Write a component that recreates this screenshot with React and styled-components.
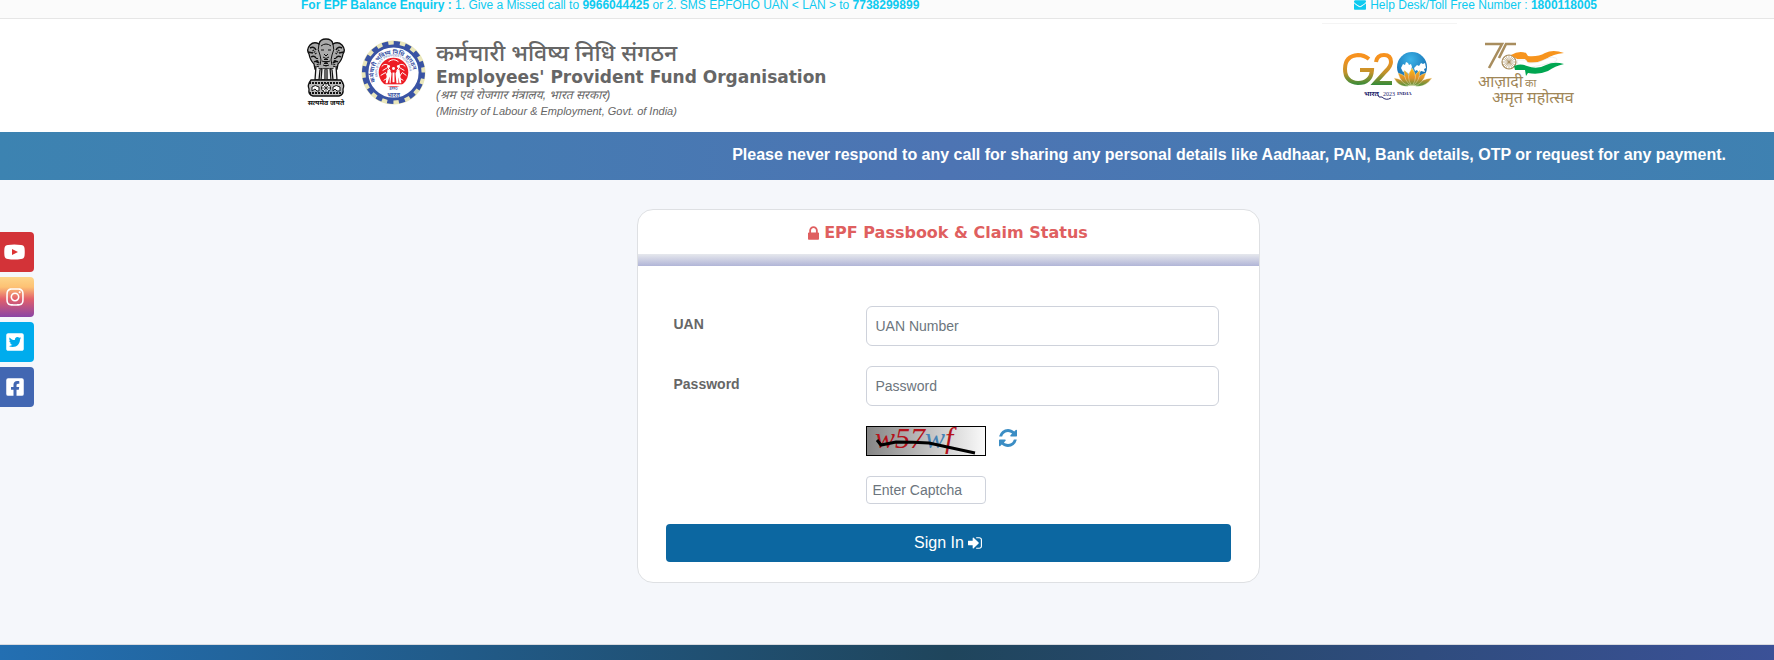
import styled, { createGlobalStyle } from "styled-components";
import { FaTwitterSquare, FaFacebookSquare, FaInstagram } from "react-icons/fa";

const GlobalStyle = createGlobalStyle`
  * {
    box-sizing: border-box;
  }
  body {
    margin: 0;
    background: #f5f7fb;
    color: #666;
    font-family: "Liberation Sans", Arial, "Noto Sans", sans-serif;
    font-size: 14px;
    line-height: 20px;
  }
`;

const Page = styled.div`
  display: flex;
  flex-direction: column;
  min-height: 100vh;
`;

const Container = styled.div`
  display: flex;
  justify-content: space-between;
  width: 100%;
  max-width: 1296px;
  margin: 0 auto;
`;

const TopBar = styled.div`
  height: 19px;
  padding-left: 124px;
  overflow: hidden;
  background: #fbfbfb;
  border-bottom: 1px solid #e6e6e6;
  color: #0dcaf0;
  font-size: 12px;
  line-height: 10px;
`;

const HelpDesk = styled.span`
  display: flex;
  gap: 4px;
`;

const Header = styled.header`
  padding-left: 124px;
  background: #fff;

  ${Container} {
    height: 113px;
    align-items: flex-start;
  }
`;

const Brand = styled.div`
  display: flex;
  gap: 10px;
  padding: 17px 0 0 4px;
`;

const Logos = styled.div`
  display: flex;
  align-items: center;
  gap: 12px;
  height: 72px;
`;

const BrandText = styled.div`
  display: flex;
  flex-direction: column;
  padding-top: 7px;
`;

const HindiTitle = styled.div`
  font-family: "Noto Sans Devanagari", "Noto Sans", sans-serif;
  font-size: 23px;
  font-weight: 500;
  line-height: 24px;
`;

const EnglishTitle = styled.h1`
  margin: 0;
  font-family: "DejaVu Sans", sans-serif;
  font-size: 17px;
  font-weight: bold;
  line-height: 20px;
`;

const Ministry = styled.div`
  font-family: "Liberation Sans", "Noto Sans Devanagari", sans-serif;
  font-size: ${(p) => (p.lang === "hi" ? "12px" : "11px")};
  font-style: italic;
  line-height: 16px;
`;

const Campaigns = styled.div`
  display: flex;
  gap: 20px;
  padding: 4px 18px 0 0;
`;

const G20Frame = styled.div`
  width: 135px;
  padding: 27px 0 0 20px;
  border-top: 1px solid #f4f4f4;
`;

const AzadiFrame = styled.div`
  padding-top: 18px;
`;

const Notice = styled.div`
  display: flex;
  justify-content: flex-end;
  height: 48px;
  padding: 13px 48px 0;
  overflow: hidden;
  background: linear-gradient(to right, #3c83b1 0, #4d74b3 948px, #3c83b1 1896px);
  color: #fff;
  font-size: 16px;
  font-weight: bold;
  white-space: nowrap;
`;

const Main = styled.main`
  display: flex;
  flex: 1;
`;

const Social = styled.nav`
  display: flex;
  flex: 0 0 122px;
  flex-direction: column;
  align-items: flex-start;
  gap: 5px;
  padding-top: 52px;
`;

const SocialLink = styled.a`
  display: flex;
  align-items: center;
  justify-content: flex-end;
  width: 34px;
  height: 40px;
  padding-right: 9px;
  border-radius: 0 4px 4px 0;
  background: ${(p) => p.$bg};
  color: #fff;
`;

const Content = styled.div`
  flex: 1;
  padding: 29px 0 61px;
`;

const Card = styled.section`
  width: 100%;
  max-width: 623px;
  margin: 0 auto;
  overflow: hidden;
  background: #fff;
  border: 1px solid #dee0e3;
  border-radius: 16px;
`;

const CardTitle = styled.h2`
  display: flex;
  align-items: center;
  justify-content: center;
  gap: 5px;
  height: 44px;
  margin: 0;
  padding-top: 2px;
  color: #df5f60;
  font-family: "DejaVu Sans", sans-serif;
  font-size: 16px;
  font-weight: bold;
`;

const CardStripe = styled.div`
  height: 12px;
  background: linear-gradient(#e6e8ed, #b1b5d7);
`;

const Form = styled.form`
  display: flex;
  flex-direction: column;
  gap: 20px;
  padding: 40px 28px 20px;
`;

const Row = styled.div`
  display: grid;
  grid-template-columns: 192px 1fr;
  padding: 0 12px 0 8px;
`;

const Label = styled.label`
  padding-top: 8px;
  font-weight: bold;
`;

const Input = styled.input`
  width: ${(p) => (p.$small ? "120px" : "100%")};
  height: ${(p) => (p.$small ? "28px" : "40px")};
  padding: 0 ${(p) => (p.$small ? "6px" : "9px")};
  border: 1px solid #ced2db;
  border-radius: ${(p) => (p.$small ? "4px" : "6px")};
  background: #fff;
  color: #495057;
  font-family: inherit;
  font-size: 14px;

  &::placeholder {
    color: #6c757d;
    opacity: 1;
  }
`;

const CaptchaLine = styled.div`
  display: flex;
  grid-column: 2;
  gap: 13px;
`;

const RefreshButton = styled.button`
  display: flex;
  align-items: center;
  height: 24px;
  padding: 0;
  border: 0;
  background: none;
  color: #3b8dc4;
`;

const SignInButton = styled.button`
  display: flex;
  align-items: center;
  justify-content: center;
  gap: 4px;
  height: 38px;
  border: 0;
  border-radius: 4px;
  background: #0c67a1;
  color: #fff;
  font-family: inherit;
  font-size: 16px;
`;

const Footer = styled.footer`
  height: 16px;
  border-top: 1px solid #d9dbe0;
  background: linear-gradient(to right, #236fb2 0, #1f455c 948px, #3f53a0 1896px);
`;

const LockIcon = () => (
  <svg width="11" height="14" viewBox="320 128 1152 1408" fill="currentColor" aria-hidden="true">
    <path d="M640 768h512v-192q0-106-75-181t-181-75-181 75-75 181v192zm832 96v576q0 40-28 68t-68 28h-960q-40 0-68-28t-28-68v-576q0-40 28-68t68-28h32v-192q0-184 132-316t316-132 316 132 132 316v192h32q40 0 68 28t28 68z" />
  </svg>
);

const MailIcon = () => (
  <svg width="12" height="10" viewBox="0 256 1792 1408" fill="currentColor" aria-hidden="true">
    <path d="M1792 710v794q0 66-47 113t-113 47h-1472q-66 0-113-47t-47-113v-794q44 49 101 87 362 246 497 345 57 42 92.5 65.5t94.5 48 110 24.5h2q51 0 110-24.5t94.5-48 92.5-65.5q170-123 498-345 57-39 100-87zm0-294q0 79-49 151t-122 123q-376 261-468 325-10 7-42.5 31t-54 38.5-52 32.5-57.5 27-50 9h-2q-23 0-50-9t-57.5-27-52-32.5-54-38.5-42.5-31q-91-64-262-182.5t-205-142.5q-62-42-117-115.5t-55-136.5q0-78 41.5-130t118.5-52h1472q65 0 112.5 47t47.5 113z" />
  </svg>
);

const RefreshIcon = () => (
  <svg width="18" height="18" viewBox="128 128 1536 1536" fill="currentColor" aria-hidden="true">
    <path d="M1639 1056q0 5-1 7-64 268-268 434.500t-478 166.500q-146 0-282.500-55t-243.500-157l-129 129q-19 19-45 19t-45-19-19-45v-448q0-26 19-45t45-19h448q26 0 45 19t19 45-19 45l-137 137q71 66 161 102t187 36q134 0 250-65t186-179q11-17 53-117 8-23 30-23h192q13 0 22.500 9.500t9.500 22.500zm25-800v448q0 26-19 45t-45 19h-448q-26 0-45-19t-19-45 19-45l138-138q-148-137-349-137-134 0-250 65t-186 179q-11 17-53 117-8 23-30 23h-199q-13 0-22.500-9.500t-9.500-22.500v-7q65-268 270-434.500t480-166.500q146 0 284 55.500t245 156.500l130-129q19-19 45-19t45 19 19 45z" />
  </svg>
);

const SignInIcon = () => (
  <svg width="14" height="12" viewBox="128 256 1536 1280" fill="currentColor" aria-hidden="true">
    <path d="M1312 896q0 26-19 45l-544 544q-19 19-45 19t-45-19-19-45v-288h-448q-26 0-45-19t-19-45v-384q0-26 19-45t45-19h448v-288q0-26 19-45t45-19 45 19l544 544q19 19 19 45zm352-352v704q0 119-84.500 203.500t-203.500 84.500h-320q-13 0-22.500-9.500t-9.500-22.500q0-4-1-20t-.5-26.500 3-23.500 10-19.500 20.500-6.500h320q66 0 113-47t47-113v-704q0-66-47-113t-113-47h-312l-11.500-1-11.500-3-8-5.500-7-9-2-13.500q0-4-1-20t-.5-26.500 3-23.500 10-19.500 20.500-6.500h320q119 0 203.500 84.500t84.500 203.500z" />
  </svg>
);

const YoutubeIcon = () => (
  <svg width="21" height="16" viewBox="0 0 21 16" aria-hidden="true">
    <path fill="#fff" d="M4 1Q10 0 17 1Q20 1 20.500 4Q21 8 20.500 12Q20 15 17 15Q10 16 4 15Q1 15 .5 12Q0 8 .5 4Q1 1 4 1z" />
    <path fill="#d33" d="M8 5l6 3-6 3z" />
  </svg>
);

// state emblem: three lions over the wheel and the lotus base
const Emblem = () => (
  <svg width="44" height="70" viewBox="-1 -1 44 70" role="img" aria-label="State Emblem of India">
    <g fill="#aaa" stroke="#111" strokeWidth="1.300">
      <path d="M13 6Q14 1 20 1Q26 1 27 6Q32 3 36 7Q40 12 37 16Q36 22 32 26L31 31H9L8 26Q4 22 3 16Q0 12 4 7Q8 3 13 6z" />
      <path d="M10 28L9 42H13L14 32M16 30L15 42H19L19 32M21 32L21 42H25L24 30M26 32L27 42H31L30 28" fill="#eee" />
      <path d="M5 42H35Q39 47 37 51Q38 57 33 58H7Q2 57 3 51Q1 47 5 42z" fill="#bbb" />
    </g>
    <g fill="none" stroke="#111">
      <path d="M13 6Q11 12 14 17Q16 22 14 27M27 6Q29 12 26 17Q24 22 26 27M15 8Q20 4 25 8M15 12H18M22 12H25M18 16L20 18 22 16M17 19Q20 22 23 19M16 23Q20 26 24 23M17 27Q20 29 23 27" />
      <path d="M4 10Q8 8 10 12M2 14L7 15M5 19Q8 17 10 20M8 24Q11 22 13 25M36 10Q32 8 30 12M38 14L33 15M35 19Q32 17 30 20M32 24Q29 22 27 25" strokeWidth="1.500" />
      <path d="M7 12L10 16M33 12L30 16M11 20L12 29M29 20L28 29M19 21V29M21 21V29" strokeDasharray="1 1" strokeWidth="2" />
      <path d="M3 45H37M3 55H37" strokeWidth="2" strokeDasharray="2 1" />
    </g>
    <g fill="#fff" stroke="#111">
      <circle cx="20" cy="50" r="4.500" />
      <path d="M20 46V54M16 50H24M17 47L23 53M23 47L17 53" strokeWidth=".7" />
      <path d="M6 49Q9 46 13 49V53H11L9 51L6 53zM27 49Q30 46 34 49V53H31L29 51L27 53z" />
    </g>
    <text x="20" y="67" textAnchor="middle" fontSize="7" fontWeight="bold" fill="#111" fontFamily="Noto Sans, sans-serif">
      सत्यमेव जयते
    </text>
  </svg>
);

const EpfoLogo = () => (
  <svg width="65" height="65" viewBox="0 0 66 66" role="img" aria-label="EPFO">
    <defs>
      <path id="ringTop" d="M15 43A20 20 0 1 1 51 43" />
      <path id="ringInner" d="M17 37A16.500 16.500 0 1 1 49 37" />
    </defs>
    <circle cx="33" cy="33" r="29.500" fill="none" stroke="#e9e6ba" strokeWidth="6" />
    <circle cx="33" cy="33" r="29.500" fill="none" stroke="#3953a4" strokeWidth="5" strokeDasharray="6.200 5.385" />
    <circle cx="33" cy="33" r="27" fill="#fff" stroke="#3953a4" strokeWidth="3" />
    <text fontSize="6" fontWeight="bold" fill="#3953a4" fontFamily="Noto Sans, sans-serif">
      <textPath href="#ringTop" startOffset="1">कर्मचारी भविष्य निधि संगठन</textPath>
    </text>
    <text fontSize="3" fill="#3953a4" fontFamily="Liberation Sans">
      <textPath href="#ringInner">EMPLOYEES' PROVIDENT FUND ORG.</textPath>
    </text>
    <circle cx="33" cy="33" r="15" fill="#ed1c24" />
    <g fill="none" stroke="#fff">
      <path d="M21 27Q24 23 28 26M38 26Q42 23 45 27M28 22Q33 18 38 22M22 31L27 28L30 31M36 31L39 28L44 31M20 36L25 33L27 37M39 37L42 33L46 36M23 41L28 38M38 38L43 41" />
    </g>
    <g fill="#fff">
      <circle cx="28" cy="27" r="1.500" />
      <circle cx="38" cy="27" r="1.500" />
      <circle cx="33" cy="29" r="1.500" />
      <path d="M27 30H29L31 34L30 44H29V37L27 44H25zM37 30H39L41 44H39L38 37V44H36L35 34zM32 33H34V38L34 43H32z" />
    </g>
    <path d="M22 46H44" stroke="#fff" strokeWidth="2" />
    <text x="33" y="51" textAnchor="middle" fontSize="3" fontWeight="bold" fill="#3953a4" fontFamily="Liberation Sans">EPFO</text>
    <text x="33" y="58" textAnchor="middle" fontSize="6" fontWeight="bold" fill="#3953a4" fontFamily="Noto Sans, sans-serif">भारत</text>
  </svg>
);

const G20Logo = () => (
  <svg width="90" height="52" viewBox="0 0 90 52" role="img" aria-label="G20">
    <defs>
      <linearGradient id="g20" x1="0" y1="0" x2="0" y2="36" gradientUnits="userSpaceOnUse">
        <stop offset=".2" stopColor="#f7921e" />
        <stop offset=".6" stopColor="#c2922b" />
        <stop offset="1" stopColor="#1c8a3c" />
      </linearGradient>
      <radialGradient id="globe" cx=".45" cy=".25" r=".8">
        <stop offset="0" stopColor="#3cb4e8" />
        <stop offset="1" stopColor="#0d5fa6" />
      </radialGradient>
      <linearGradient id="lotus" x1="0" y1="18" x2="0" y2="36" gradientUnits="userSpaceOnUse">
        <stop offset="0" stopColor="#fdb913" />
        <stop offset=".5" stopColor="#e0912a" />
        <stop offset="1" stopColor="#3f9440" />
      </linearGradient>
    </defs>
    <path d="M27 8Q22 4 16 4Q3 5 3 18Q3 31 16 32Q29 32 30 19H18" fill="none" stroke="url(#g20)" strokeWidth="4" />
    <path d="M34 11Q35 4 42 4Q49 4 49 11Q49 15 44 20L33 32H50" fill="none" stroke="url(#g20)" strokeWidth="4" />
    <circle cx="70" cy="16" r="15" fill="url(#globe)" />
    <path fill="#fff" d="M59 17L61 13L63 14L64 11L66 12L67 14L69 13L70 16L69 18L70 20L67 23L63 20L61 21zM72 17L75 14L77 15L79 12L81 13L83 12L84 17L82 18L83 21L79 20L77 22L75 19L73 20z" />
    <g fill="url(#lotus)" stroke="#fff3d0" strokeWidth=".4">
      <path d="M52 27Q61 28 67 35Q57 37 52 27zM90 27Q79 28 73 35Q83 37 90 27z" />
      <path d="M56 22Q65 24 69 35Q59 34 56 22zM84 22Q75 24 71 35Q81 34 84 22z" />
      <path d="M62 19Q70 25 70 35Q62 31 62 19zM78 19Q70 25 70 35Q78 31 78 19z" />
      <path d="M70 17Q77 26 70 35Q63 26 70 17z" />
    </g>
    <g fill="#26266e">
      <text x="22" y="45" fontSize="7" fontWeight="bold" fontFamily="Noto Sans, sans-serif">भारत</text>
      <text x="41" y="45" fontSize="6" fontFamily="Liberation Serif">2023</text>
      <text x="55" y="44" fontSize="5" fontWeight="bold" fontFamily="Liberation Serif">INDIA</text>
    </g>
    <path d="M36 44Q36 47 40 46Q44 50 49 47" fill="none" stroke="#26266e" />
  </svg>
);

const AzadiLogo = () => (
  <svg width="102" height="72" viewBox="0 0 102 72" role="img" aria-label="Azadi Ka Amrit Mahotsav">
    <g fill="none" stroke="#a88d5e" strokeWidth="2.600">
      <path d="M8 3H25L12 27" />
      <path d="M39 3H29L22 17" />
      <circle cx="32" cy="21" r="7" strokeWidth="1.200" />
      <path d="M32 14V28M25 21H39M27 16L37 26M37 16L27 26M29 15L35 27M35 15L29 27M26 18L38 24M38 18L26 24" strokeWidth=".6" />
    </g>
    <path fill="#f7941d" d="M34 14Q42 9 49 12L51 15Q61 16 68 12Q76 8 87 12Q76 13 69 18Q59 23 50 21L48 18H40z" />
    <path fill="#fff" stroke="#ddd" strokeWidth=".5" d="M40 19L49 19L51 22Q61 23 69 18L75 16Q84 18 77 21Q66 24 50 27L41 24z" />
    <path fill="#00a651" d="M37 25Q43 22 50 25Q60 29 69 24Q77 20 87 23Q78 25 71 30Q62 34 51 32L49 35L48 29H38z" />
    <g fill="#a08657" fontFamily="Noto Sans, sans-serif">
      <text x="1" y="46" fontSize="16">आज़ादी</text>
      <text x="48" y="46" fontSize="11">का</text>
      <text x="15" y="62" fontSize="16">अमृत महोत्सव</text>
    </g>
  </svg>
);

const CaptchaImage = () => (
  <svg width="120" height="30" viewBox="0 0 120 30" role="img" aria-label="Captcha">
    <defs>
      <linearGradient id="captchaBg">
        <stop offset="0" stopColor="#858585" />
        <stop offset="1" stopColor="#fafafa" />
      </linearGradient>
    </defs>
    <rect x=".5" y=".5" width="119" height="29" fill="url(#captchaBg)" stroke="#000" />
    <g fontFamily="Liberation Serif, serif" fontSize="30" fontStyle="italic" fill="#b5121b">
      <text x="9" y="22">w</text>
      <text x="29" y="22">57</text>
      <text x="59" y="22" fill="#4682b4">w</text>
      <text x="79" y="22">f</text>
    </g>
    <path d="M11 14L15 19L30 16Q48 16 63 17L109 27" fill="none" stroke="#000" strokeWidth="3" />
  </svg>
);

const socials = [
  { name: "YouTube", bg: "#d33338", icon: <YoutubeIcon /> },
  { name: "Instagram", bg: "linear-gradient(#fdd58a, #fdc274 25%, #e2606b 55%, #8a45a5)", icon: <FaInstagram size={20} /> },
  { name: "Twitter", bg: "#00aced", icon: <FaTwitterSquare size={20} /> },
  { name: "Facebook", bg: "#4267b2", icon: <FaFacebookSquare size={20} /> },
];

const App = () => {
  const handleSubmit = (e) => {
    e.preventDefault();
  };

  return (
    <Page>
      <GlobalStyle />
      <TopBar>
        <Container>
          <span>
            <b>For EPF Balance Enquiry :</b> 1. Give a Missed call to <b>9966044425</b> or 2. SMS EPFOHO UAN &lt; LAN &gt; to <b>7738299899</b>
          </span>
          <HelpDesk>
            <MailIcon />
            <span>Help Desk/Toll Free Number : <b>1800118005</b></span>
          </HelpDesk>
        </Container>
      </TopBar>
      <Header>
        <Container>
          <Brand>
            <Logos>
              <Emblem />
              <EpfoLogo />
            </Logos>
            <BrandText>
              <HindiTitle lang="hi">कर्मचारी भविष्य निधि संगठन</HindiTitle>
              <EnglishTitle>Employees' Provident Fund Organisation</EnglishTitle>
              <Ministry lang="hi">(श्रम एवं रोजगार मंत्रालय, भारत सरकार)</Ministry>
              <Ministry>(Ministry of Labour &amp; Employment, Govt. of India)</Ministry>
            </BrandText>
          </Brand>
          <Campaigns>
            <G20Frame>
              <G20Logo />
            </G20Frame>
            <AzadiFrame>
              <AzadiLogo />
            </AzadiFrame>
          </Campaigns>
        </Container>
      </Header>
      <Notice>
        Please never respond to any call for sharing any personal details like Aadhaar, PAN, Bank details, OTP or request for any payment.
      </Notice>
      <Main>
        <Social>
          {socials.map((s) => (
            <SocialLink key={s.name} href="#" aria-label={s.name} $bg={s.bg}>
              {s.icon}
            </SocialLink>
          ))}
        </Social>
        <Content>
          <Card>
            <CardTitle>
              <LockIcon />
              EPF Passbook &amp; Claim Status
            </CardTitle>
            <CardStripe />
            <Form onSubmit={handleSubmit}>
              <Row>
                <Label htmlFor="uan">UAN</Label>
                <Input id="uan" type="text" placeholder="UAN Number" />
              </Row>
              <Row>
                <Label htmlFor="password">Password</Label>
                <Input id="password" type="password" placeholder="Password" />
              </Row>
              <Row>
                <CaptchaLine>
                  <CaptchaImage />
                  <RefreshButton type="button" aria-label="Refresh captcha">
                    <RefreshIcon />
                  </RefreshButton>
                </CaptchaLine>
              </Row>
              <Row>
                <CaptchaLine>
                  <Input $small type="text" placeholder="Enter Captcha" aria-label="Enter Captcha" />
                </CaptchaLine>
              </Row>
              <SignInButton type="submit">
                Sign In <SignInIcon />
              </SignInButton>
            </Form>
          </Card>
        </Content>
      </Main>
      <Footer />
    </Page>
  );
};

export default App;
